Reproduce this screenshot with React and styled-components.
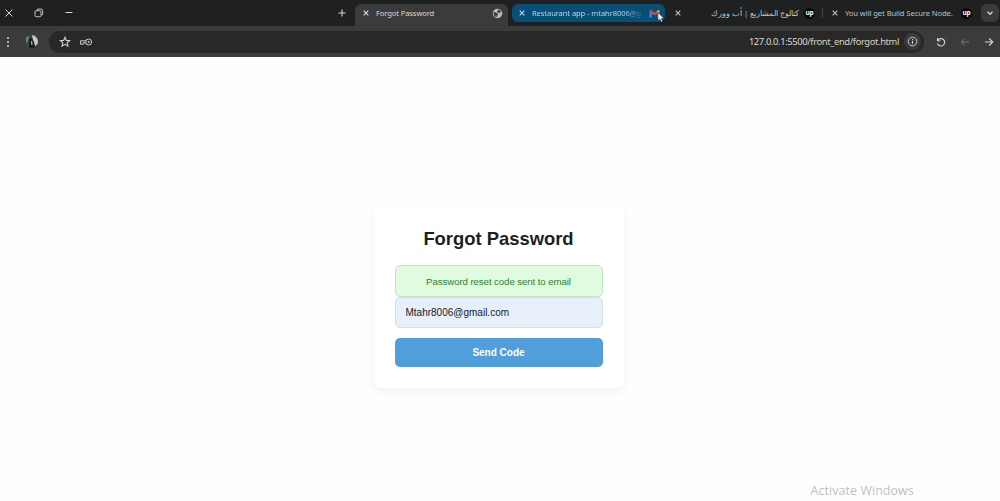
import React from 'react';
import styled, { createGlobalStyle, css } from 'styled-components';

const GlobalStyle = createGlobalStyle`
	* { box-sizing: border-box; }
	body { margin: 0; background: #fefefe; overflow: hidden; }
`;

const Window = styled.div`
	display: flex;
	flex-direction: column;
	height: 501px;
	width: 1000px;
	position: relative;
	font-family: "Noto Sans", "Open Sans", sans-serif;
`;

const TabStrip = styled.div`
	display: flex;
	height: 26px;
	background: #1e2120;
	color: #d4d4d4;
`;

const WindowControls = styled.div`
	display: flex;
	align-items: center;
	gap: 18px;
	padding-left: 2.5px;
`;

const NewTab = styled.div`
	display: flex;
	align-items: center;
	margin-left: auto;
	margin-right: 7px;
`;

const Tab = styled.div`
	display: flex;
	align-items: center;
	width: 153px;
	height: 18px;
	margin-top: 4px;
	padding: 0 5px 0 6px;
	border-radius: 6px;
	font-size: 7.6px;
	color: #bfc1c0;
	${props => props.$active && css`
		height: 22px;
		padding: 0 5px 4px 7px;
		border-radius: 6px 6px 0 0;
		background: #3b3b3b;
		color: #d8d8d8;
	`}
	${props => props.$grouped && css`
		margin: 4px 3px 0 4px;
		background: #084f77;
		color: #b6d3e8;
	`}
`;

const TabTitle = styled.div`
	flex: 1;
	margin: 0 3px 0 6px;
	white-space: nowrap;
	line-height: 18px;
	letter-spacing: ${props => props.$spacing || '0'};
	${props => props.$rtl && css`
		margin-right: 5px;
		direction: rtl;
		font-size: 7.5px;
	`}
	${props => props.$fade && css`
		mask-image: linear-gradient(to right, #000 80%, transparent);
	`}
`;

const TabDivider = styled.div`
	width: 1px;
	height: 10px;
	margin: 8px 2px 0 1px;
	background: #444746;
`;

const UpBadge = styled.div`
	width: 11px;
	height: 11px;
	margin-right: 1px;
	border-radius: 50%;
	background: #050505;
	color: #fff;
	font: bold 6.5px/10px "Open Sans", sans-serif;
	letter-spacing: -0.3px;
	text-align: center;
`;

const TabSearch = styled.div`
	display: flex;
	align-items: center;
	justify-content: center;
	width: 18px;
	height: 18px;
	margin: 4px 1px 0 3px;
	border-radius: 6px;
	background: #3a3b3b;
`;

const Toolbar = styled.div`
	display: flex;
	align-items: center;
	height: 31px;
	padding: 0 5px 0 2px;
	background: #3b3b3b;
	color: #d2d2d2;
`;

const Avatar = styled.svg`
	margin: 0 11px 0 11px;
	border-radius: 50%;
`;

const AddressBar = styled.div`
	display: flex;
	align-items: center;
	gap: 9px;
	width: 875px;
	height: 22px;
	padding: 0 3px 0 10px;
	border-radius: 11px;
	background: #282828;
`;

const Url = styled.div`
	margin-left: auto;
	margin-right: -4px;
	font-size: 9.4px;
	line-height: 20px;
	letter-spacing: -0.38px;
	color: #d9dcd8;
	span { color: #d2d2c2; }
`;

const SiteInfo = styled.div`
	display: flex;
	align-items: center;
	justify-content: center;
	width: 17px;
	height: 17px;
	border-radius: 50%;
	background: #3a3a3a;
`;

const NavButtons = styled.div`
	display: flex;
	justify-content: space-between;
	flex: 1;
	margin-left: 11px;
`;

const Page = styled.main`
	display: flex;
	flex: 1;
	justify-content: center;
	align-items: flex-start;
	padding: 149px 3px 0 0;
	background: #fefefe;
	font-family: "Liberation Sans", Arial, sans-serif;
`;

const Card = styled.form`
	display: flex;
	flex-direction: column;
	width: 250px;
	height: 182px;
	padding: 22px 21px 21px;
	border-radius: 8px;
	background: #fff;
	box-shadow: 0 3px 8px rgba(0, 0, 0, 0.06);
`;

const Title = styled.h1`
	margin: 0 0 15px;
	font-size: 18.4px;
	line-height: 22px;
	text-align: center;
	white-space: nowrap;
	color: #1d1f21;
`;

const Message = styled.div`
	height: 32px;
	border: 1px solid #c5e6c5;
	border-radius: 5px;
	background: #e0fbdf;
	color: #2c822e;
	font-size: 9.7px;
	line-height: 31px;
	letter-spacing: -0.1px;
	text-align: center;
`;

const Input = styled.input`
	width: 100%;
	height: 31px;
	margin: 0 0 10px;
	padding: 0 10px;
	border: 1px solid #d3dfe9;
	border-radius: 5px;
	outline: none;
	background: #e7f0fa;
	color: #15191e;
	font: 10px "Liberation Sans", Arial, sans-serif;
`;

const Button = styled.button`
	height: 30px;
	padding: 0;
	border: 0;
	border-radius: 5px;
	background: #509eda;
	color: #fff;
	font: bold 10px "Liberation Sans", Arial, sans-serif;
`;

const Watermark = styled.div`
	position: absolute;
	left: 810.5px;
	top: 481px;
	font: 12.4px/20px "Open Sans", sans-serif;
	letter-spacing: 0.1px;
	white-space: nowrap;
	color: #bfbfbf;
`;

const Cursor = styled.svg`
	position: absolute;
	left: 656.5px;
	top: 12px;
`;

const Icon = ({ size = 12, stroke = 1, children, ...rest }) => (
	<svg width={size} height={size} viewBox="0 0 12 12" fill="none" stroke="currentColor" strokeWidth={stroke} {...rest}>
		{children}
	</svg>
);

const CloseTab = () => (
	<Icon size={8} stroke={1.7}><path d="M2.5 2.5l7 7M9.5 2.5l-7 7" /></Icon>
);

const Globe = () => (
	<svg width="11" height="11" viewBox="0 0 12 12">
		<circle cx="6" cy="6" r="5.2" fill="#b9bbbb" />
		<path d="M1.5 4.6l2.6.1 1.7 1.5 1.2.2-.3 1.2-1.4.5-.1 1.9C2.9 9.7 1.2 7.2 1.5 4.6zM6.4 1.6l2 .6 1.5 2-1.3.9-1.3-.2-.7.6-1-.7.1-1.3 1-.5z" fill="#3f4141" />
	</svg>
);

const Gmail = () => (
	<svg width="11" height="9" viewBox="0 0 11 9">
		<path d="M.5 2.5L2.8 4.2V8.5H1.2a.7.7 0 0 1-.7-.7z" fill="#4285f4" />
		<path d="M8.2 4.2l2.3-1.7v5.3a.7.7 0 0 1-.7.7H8.2z" fill="#34a853" />
		<path d="M8.2 1.7l.8-.6c.7-.5 1.5 0 1.5.8v.8L8.2 4.4z" fill="#fbbc04" />
		<path d="M.5 1.9C.5 1 1.4.6 2.1 1.1l3.4 2.6 2.7-2v2.6L5.5 6.4.5 2.7z" fill="#ea4335" />
	</svg>
);

const Tabs = () => (
	<TabStrip>
		<WindowControls>
			<Icon><path d="M2.5 2.5l7 7M9.5 2.5l-7 7" /></Icon>
			<Icon stroke={0.9}>
				<rect x="2" y="3.7" width="6" height="6" rx="1.2" />
				<path d="M4 3.5V3q0-.9 1-.9h3.2q1.5 0 1.5 1.5V7q0 .9-1 1h-.5" />
			</Icon>
			<Icon><path d="M2.5 5.5h7" /></Icon>
		</WindowControls>
		<NewTab><Icon stroke={1.1}><path d="M6 2.5v7M2.5 6h7" /></Icon></NewTab>
		<Tab $active>
			<CloseTab />
			<TabTitle $spacing="-0.12px">Forgot Password</TabTitle>
			<Globe />
		</Tab>
		<Tab $grouped>
			<CloseTab />
			<TabTitle $fade $spacing="-0.1px">Restaurant app - mtahr8006@g</TabTitle>
			<Gmail />
		</Tab>
		<Tab>
			<CloseTab />
			<TabTitle $rtl>كتالوج المشاريع | أب وورك</TabTitle>
			<UpBadge>up</UpBadge>
		</Tab>
		<TabDivider />
		<Tab>
			<CloseTab />
			<TabTitle $spacing="-0.08px">You will get Build Secure Node.</TabTitle>
			<UpBadge>up</UpBadge>
		</Tab>
		<TabSearch><Icon size={10} stroke={1.6}><path d="M3 4.5l3 3 3-3" /></Icon></TabSearch>
	</TabStrip>
);

const Navigation = () => (
	<Toolbar>
		<Icon>
			<g fill="currentColor" stroke="none">
				<circle cx="6" cy="2" r="1" />
				<circle cx="6" cy="6" r="1" />
				<circle cx="6" cy="10" r="1" />
			</g>
		</Icon>
		<Avatar width="13" height="13" viewBox="0 0 13 13">
			<rect width="13" height="13" fill="#394646" />
			<path d="M7 0h6v9l-3 2-2-5z" fill="#c9c8bd" />
			<path d="M1 2l3-1-1 5-2 2z" fill="#638787" />
			<path d="M4 4l3-1 2 4 1 6H4z" fill="#171c20" />
			<path d="M6 6l1.2 0 .3 4-1.2 0z" fill="#b3b8ba" />
		</Avatar>
		<AddressBar>
			<Icon stroke={1.1}>
				<path d="M6 1.3l1.35 3.1 3.35.3-2.55 2.2.8 3.3L6 8.4l-2.95 1.8.8-3.3L1.3 4.7l3.35-.3z" />
			</Icon>
			<svg width="13" height="10" viewBox="0 0 13 10" fill="none" stroke="currentColor" strokeWidth="1">
				<circle cx="8.6" cy="5" r="3" />
				<circle cx="8.6" cy="5" r="1" fill="currentColor" stroke="none" />
				<path d="M5.7 3.8H.6v3.4h2.7V5.8h2.3" />
			</svg>
			<Url>127.0.0.1:5500<span>/front_end/forgot.html</span></Url>
			<SiteInfo>
				<Icon size={11}>
					<circle cx="6" cy="6" r="4.7" />
					<path d="M6 5.4v3.1M6 3.3v1.2" strokeWidth="1.2" />
				</Icon>
			</SiteInfo>
		</AddressBar>
		<NavButtons>
			<Icon stroke={1.1}>
				<path d="M2.5 2v2.8h2.8M2.7 4.6A3.7 3.7 0 1 1 2.5 7.5" />
			</Icon>
			<Icon color="#7b7b7b"><path d="M10 6H2.3M5.8 2.5L2.3 6l3.5 3.5" /></Icon>
			<Icon stroke={1.2}><path d="M2 6h7.7M6.2 2.5L9.7 6 6.2 9.5" /></Icon>
		</NavButtons>
	</Toolbar>
);

export default () => (
	<Window>
		<GlobalStyle />
		<Tabs />
		<Navigation />
		<Page>
			<Card>
				<Title>Forgot Password</Title>
				<Message>Password reset code sent to email</Message>
				<Input type="text" defaultValue="Mtahr8006@gmail.com" />
				<Button type="button">Send Code</Button>
			</Card>
		</Page>
		<Watermark>Activate Windows</Watermark>
		<Cursor width="8" height="11" viewBox="0 0 8 11">
			<path d="M1 .7v8l1.9-1.8 1.2 3 1.4-.6-1.2-2.8H7z" fill="#fff" stroke="#222" strokeWidth=".5" />
		</Cursor>
	</Window>
);
